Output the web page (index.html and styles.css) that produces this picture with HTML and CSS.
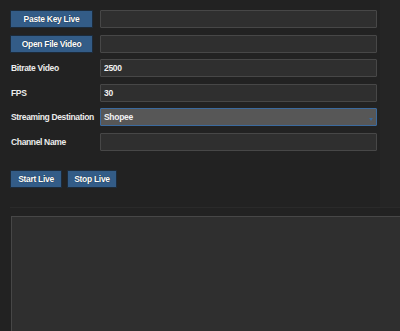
FILE: index.html
```html
<!doctype html>
<html lang="en">
<head>
    <meta charset="UTF-8">
    <meta name="viewport" content="width=device-width, initial-scale=1.0">
    <link rel="stylesheet" href="styles.css">
    <title>Live Stream</title>
</head>
<body>
    <div class="app">
        <div class="top">
            <div class="form">
                <div class="grid">
                    <button class="btn">Paste Key Live</button>
                    <input class="field" type="text">

                    <button class="btn">Open File Video</button>
                    <input class="field" type="text">

                    <label class="label">Bitrate Video</label>
                    <input class="field" type="text" value="2500">

                    <label class="label">FPS</label>
                    <input class="field" type="text" value="30">

                    <label class="label">Streaming Destination</label>
                    <div class="select">Shopee<span class="arrow"></span></div>

                    <label class="label">Channel Name</label>
                    <input class="field" type="text">
                </div>
                <div class="actions">
                    <button class="btn btn-start">Start Live</button>
                    <button class="btn btn-stop">Stop Live</button>
                </div>
            </div>
            <div class="track"></div>
        </div>
        <div class="preview"></div>
    </div>
</body>
</html>
```

FILE: styles.css
```css
body {
    margin: 0;
    padding: 0;
    background-color: #222222;
    font-family: "Liberation Sans", Arial, sans-serif;
    font-weight: bold;
    font-size: 8.5px;
    letter-spacing: -0.35px;
    color: #ececec;
    overflow: hidden;
}

.app {
    width: 400px;
    height: 331px;
    display: flex;
    flex-direction: column;
}

.top {
    display: flex;
    height: 207px;
    flex-shrink: 0;
    margin-left: 10px;
    border-bottom: 1px solid #2a2a2a;
}

.form {
    flex: 1;
    padding-top: 10px;
}

.track {
    width: 20px;
    background-color: #252525;
}

.grid {
    display: grid;
    grid-template-columns: 83px 277px;
    column-gap: 7px;
    row-gap: 6.5px;
    grid-auto-rows: 18px;
}

.btn {
    box-sizing: border-box;
    height: 18px;
    padding: 0;
    margin: 0;
    background-color: #335c87;
    border: 1px solid #1c2b3b;
    border-radius: 1px;
    color: #ffffff;
    font-family: inherit;
    font-weight: bold;
    font-size: 8.5px;
    letter-spacing: -0.3px;
    text-shadow: 0 0 1px #0b1624;
}

.label {
    display: flex;
    align-items: center;
    padding-left: 1px;
    white-space: nowrap;
}

.field,
.select {
    box-sizing: border-box;
    height: 18px;
    margin: 0;
    padding: 0 3px;
    background-color: #2f2f2f;
    border: 1px solid #474747;
    border-radius: 1px;
    color: #f2f2f2;
    font-family: inherit;
    font-weight: bold;
    font-size: 8.5px;
    letter-spacing: -0.3px;
    outline: none;
}

.select {
    position: relative;
    display: flex;
    align-items: center;
    background-color: #575757;
    border-color: #3b6a9e;
}

.arrow {
    position: absolute;
    right: 3px;
    bottom: 4px;
    width: 0;
    height: 0;
    border-left: 2.5px solid transparent;
    border-right: 2.5px solid transparent;
    border-top: 3px solid #3b6a9e;
}

.actions {
    display: flex;
    gap: 5px;
    margin-top: 19.5px;
}

.btn-start {
    width: 52px;
}

.btn-stop {
    width: 50px;
}

.preview {
    flex: 1;
    margin-top: 8px;
    margin-left: 11px;
    background-color: #2f2f2f;
    border-top: 1px solid #474747;
    border-left: 1px solid #474747;
}
```
